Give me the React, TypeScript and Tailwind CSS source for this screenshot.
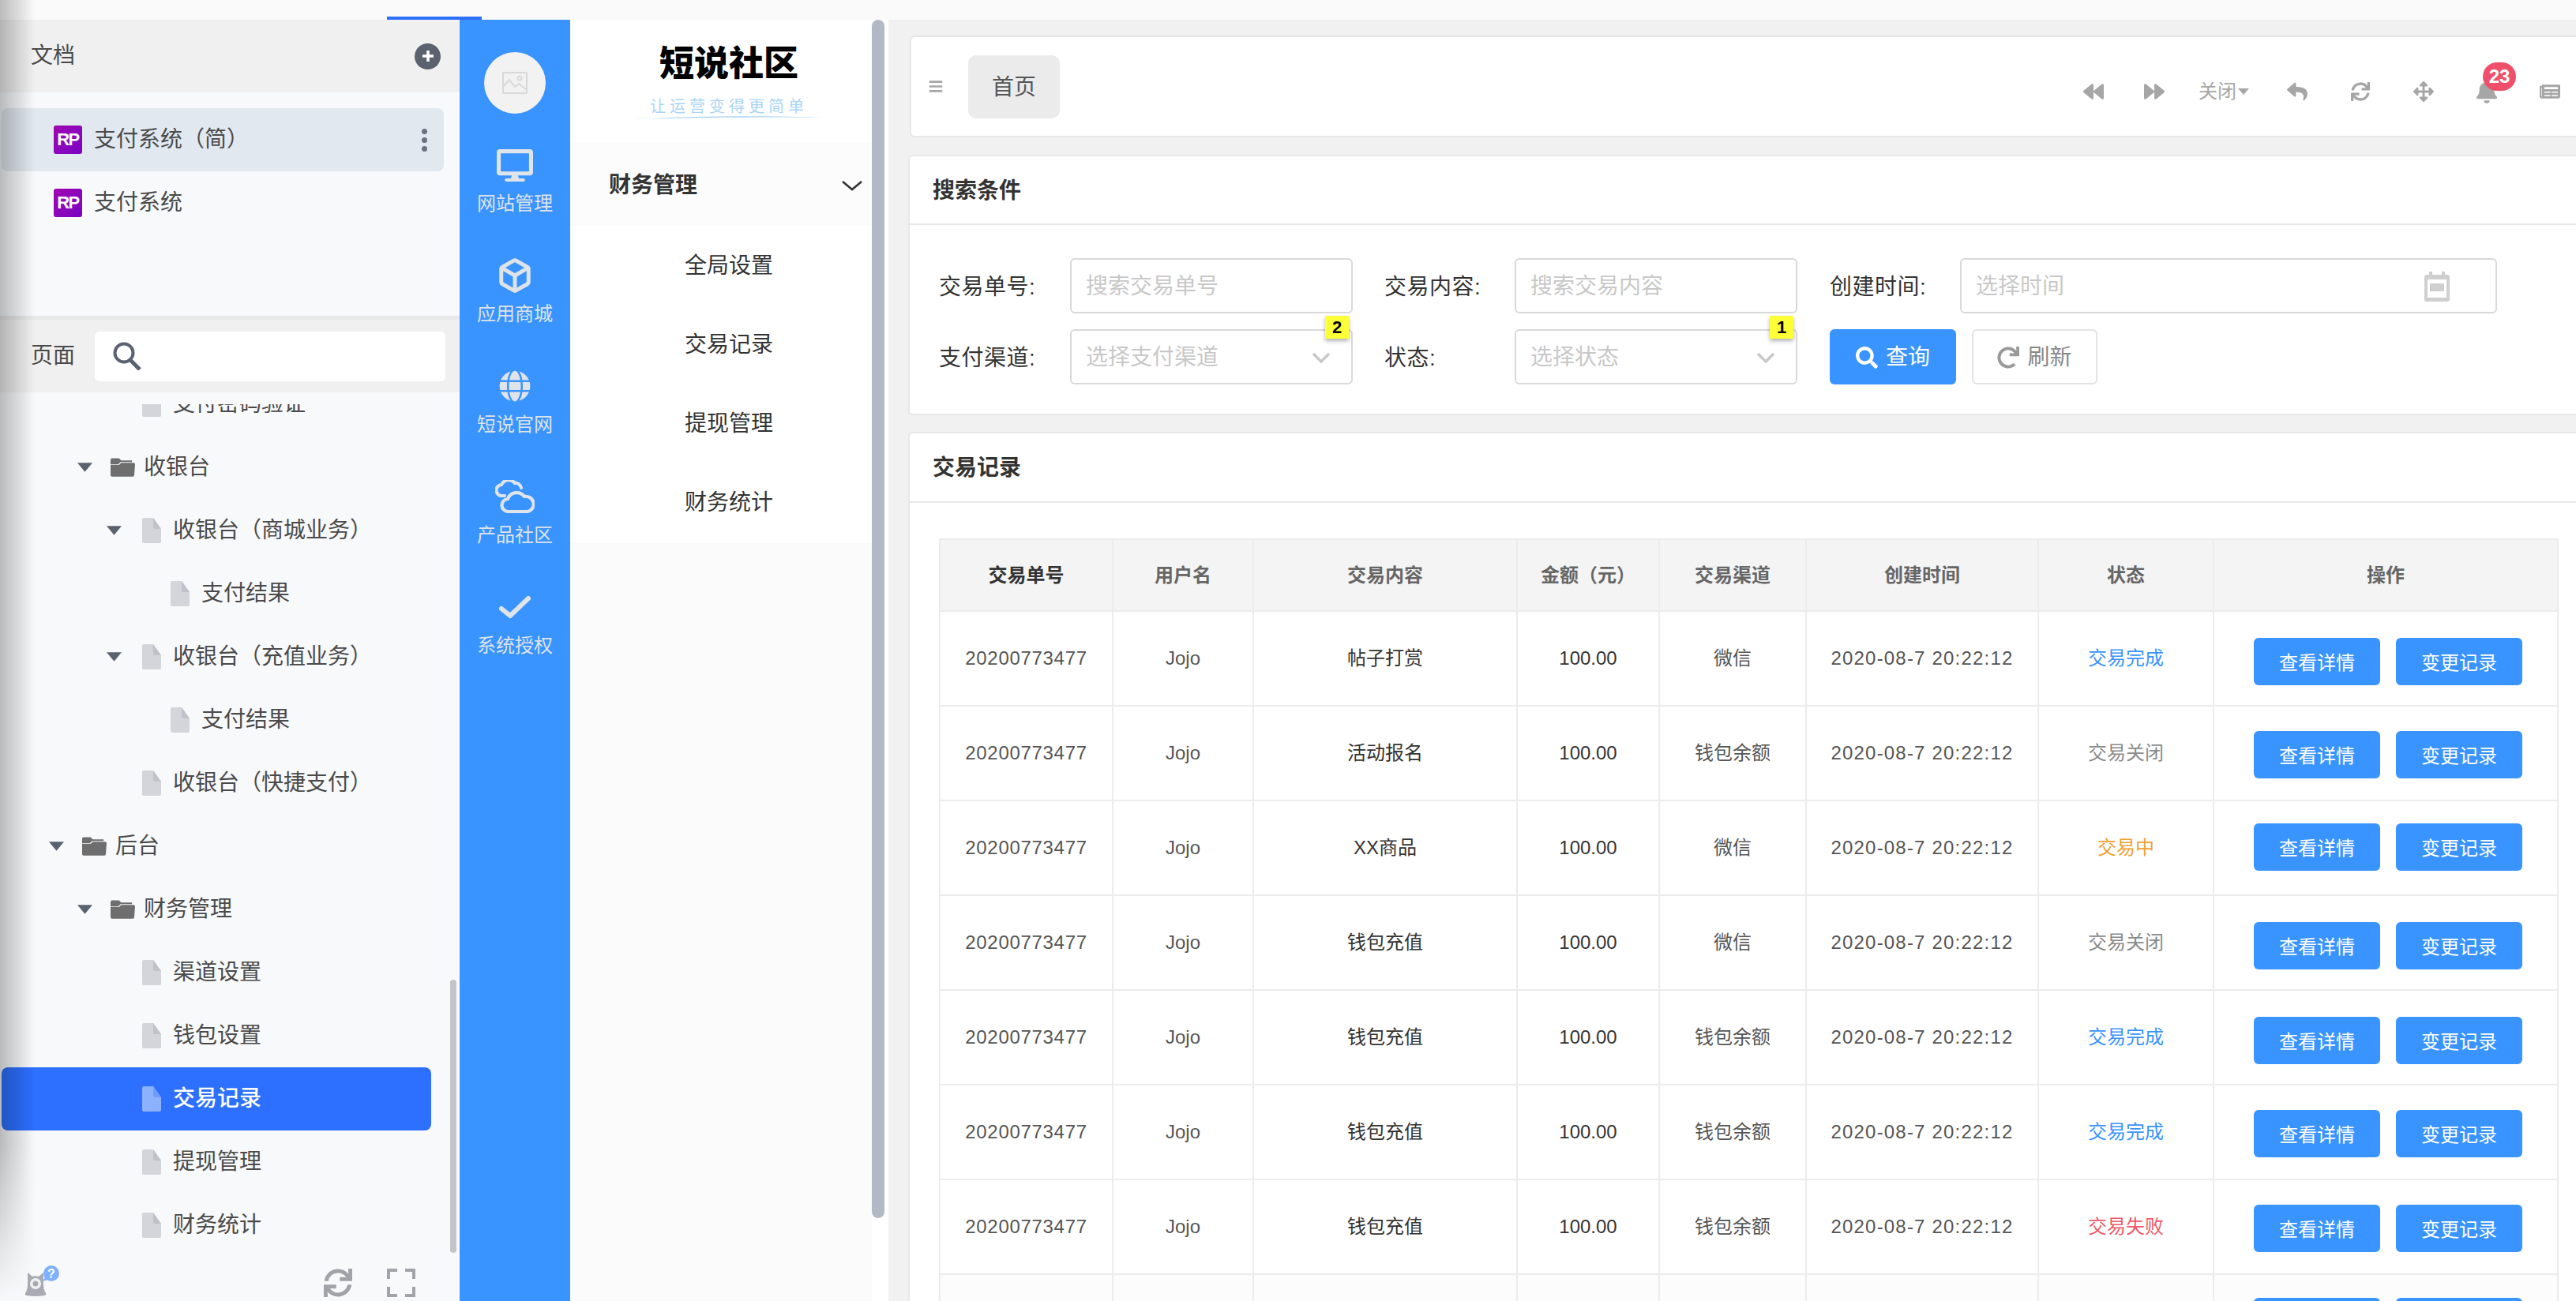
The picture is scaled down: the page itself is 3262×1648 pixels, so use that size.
import React from "react";
import { Box } from "lucide-react";
import {
  FaArrowsAlt,
  FaBackward,
  FaBars,
  FaBell,
  FaDesktop,
  FaForward,
  FaGlobe,
  FaNewspaper,
  FaRedo,
  FaReply,
  FaSearch,
  FaSync,
} from "react-icons/fa";

type TreeRow = {
  label: string;
  kind: "folder" | "file";
  caretClass?: string;
  iconClass: string;
  active?: boolean;
};

const treeRows: TreeRow[] = [
  { label: "支付密码验证", kind: "file", iconClass: "ml-[180px]" },
  { label: "收银台", kind: "folder", caretClass: "ml-[98px]", iconClass: "ml-[23px]" },
  { label: "收银台（商城业务）", kind: "file", caretClass: "ml-[135px]", iconClass: "ml-[26px]" },
  { label: "支付结果", kind: "file", iconClass: "ml-[216px]" },
  { label: "收银台（充值业务）", kind: "file", caretClass: "ml-[135px]", iconClass: "ml-[26px]" },
  { label: "支付结果", kind: "file", iconClass: "ml-[216px]" },
  { label: "收银台（快捷支付）", kind: "file", iconClass: "ml-[180px]" },
  { label: "后台", kind: "folder", caretClass: "ml-[62px]", iconClass: "ml-[23px]" },
  { label: "财务管理", kind: "folder", caretClass: "ml-[98px]", iconClass: "ml-[23px]" },
  { label: "渠道设置", kind: "file", iconClass: "ml-[180px]" },
  { label: "钱包设置", kind: "file", iconClass: "ml-[180px]" },
  { label: "交易记录", kind: "file", iconClass: "ml-[178px]", active: true },
  { label: "提现管理", kind: "file", iconClass: "ml-[180px]" },
  { label: "财务统计", kind: "file", iconClass: "ml-[180px]" },
];

const tableHead = ["交易单号", "用户名", "交易内容", "金额（元）", "交易渠道", "创建时间", "状态", "操作"];

const tableRows = [
  { content: "帖子打赏", channel: "微信", status: "交易完成", statusClass: "text-[#3994ff]", btnClass: "mt-[33px]" },
  { content: "活动报名", channel: "钱包余额", status: "交易关闭", statusClass: "text-[#8a8a8a]", btnClass: "mt-[31px]" },
  { content: "XX商品", channel: "微信", status: "交易中", statusClass: "text-[#f0a030]", btnClass: "mt-[28px]" },
  { content: "钱包充值", channel: "微信", status: "交易关闭", statusClass: "text-[#8a8a8a]", btnClass: "mt-[33px]" },
  { content: "钱包充值", channel: "钱包余额", status: "交易完成", statusClass: "text-[#3994ff]", btnClass: "mt-[33px]" },
  { content: "钱包充值", channel: "钱包余额", status: "交易完成", statusClass: "text-[#3994ff]", btnClass: "mt-[31px]" },
  { content: "钱包充值", channel: "钱包余额", status: "交易失败", statusClass: "text-[#f05a6a]", btnClass: "mt-[31px]" },
  { content: "钱包充值", channel: "钱包余额", status: "交易完成", statusClass: "text-[#3994ff]", btnClass: "mt-[29px]" },
];

const RpIcon = () => (
  <span className="flex h-[36px] w-[36px] shrink-0 items-center justify-center rounded-[3px] bg-gradient-to-br from-[#a000b0] to-[#7a00c4] text-[22px] font-bold leading-none tracking-[-1.5px] text-white">
    RP
  </span>
);

const FileIcon = ({ active }: { active?: boolean }) => (
  <svg viewBox="0 0 24 32" className="h-[32px] w-[24px] shrink-0">
    <path
      d="M2 0h12l10 14v16a2 2 0 0 1-2 2H2a2 2 0 0 1-2-2V2a2 2 0 0 1 2-2z"
      fill={active ? "#8cb2ff" : "#d3d5da"}
    />
    <path d="M14 0l10 14H16a2 2 0 0 1-2-2z" fill={active ? "#6f9cf8" : "#bfc2c9"} />
  </svg>
);

const FolderIcon = () => (
  <svg viewBox="0 0 32 24" className="h-[24px] w-[31px] shrink-0">
    <path d="M0 2a2 2 0 0 1 2-2h9l3 3h14v2H13l-3 3H0z" fill="#6e6e6e" />
    <path d="M0 9h11l3-3h16a2 2 0 0 1 2 2l-1 14a2 2 0 0 1-2 2H2a2 2 0 0 1-2-2z" fill="#6e6e6e" />
  </svg>
);

const Caret = () => (
  <svg viewBox="0 0 20 12" className="h-[12px] w-[19px] shrink-0">
    <path d="M0 0h20L10 12z" fill="#5a6270" />
  </svg>
);

const TreeItem = ({ row }: { row: TreeRow }) => (
  <div className="h-[80px] w-[546px] shrink-0">
    <div
      className={
        row.active
          ? "ml-[2px] flex h-[80px] w-[544px] items-center rounded-[8px] bg-[#2d6fff] font-medium text-white"
          : "flex h-[80px] items-center text-[#4a4a4a]"
      }
    >
      {row.caretClass && <span className={row.caretClass}><Caret /></span>}
      <span className={row.iconClass}>
        {row.kind === "folder" ? <FolderIcon /> : <FileIcon active={row.active} />}
      </span>
      <span className={row.kind === "folder" ? "ml-[11px] text-[28px] leading-none" : "ml-[15px] text-[28px] leading-none"}>
        {row.label}
      </span>
    </div>
  </div>
);

const DocsPanel = () => (
  <div className="relative flex h-full w-[582px] shrink-0 flex-col bg-[#f8f9fb]">
    <div className="flex h-[92px] shrink-0 items-center justify-between bg-[#f0f0f0] pl-[39px] pr-[24px]">
      <span className="text-[28px] leading-none text-[#4a4a4a]">文档</span>
      <span className="flex h-[33px] w-[33px] items-center justify-center rounded-full bg-[#5a6270]">
        <svg viewBox="0 0 20 20" className="h-[20px] w-[20px]">
          <path d="M10 3v14M3 10h14" stroke="#fff" strokeWidth="3.5" />
        </svg>
      </span>
    </div>
    <div className="h-[283px] shrink-0 pt-[20px]">
      <div className="ml-[2px] flex h-[80px] w-[560px] items-center rounded-[8px] bg-[#e2e8f0] pl-[66px] pr-[21px] text-[#4a4a4a]">
        <RpIcon />
        <span className="ml-[15px] text-[28px] leading-none">支付系统（简）</span>
        <span className="ml-auto flex flex-col gap-[4px]">
          <i className="block h-[7px] w-[7px] rounded-full bg-[#6b7280]" />
          <i className="block h-[7px] w-[7px] rounded-full bg-[#6b7280]" />
          <i className="block h-[7px] w-[7px] rounded-full bg-[#6b7280]" />
        </span>
      </div>
      <div className="flex h-[80px] items-center pl-[68px] text-[#4a4a4a]">
        <RpIcon />
        <span className="ml-[15px] text-[28px] leading-none">支付系统</span>
      </div>
    </div>
    <div className="h-[5px] shrink-0 bg-[#e8e8e8]" />
    <div className="flex h-[92px] shrink-0 items-center bg-[#f0f0f0] pl-[39px]">
      <span className="text-[28px] leading-none text-[#4a4a4a]">页面</span>
      <div className="ml-[25px] flex h-[63px] w-[444px] items-center rounded-[6px] bg-white pl-[23px]">
        <svg viewBox="0 0 36 36" className="h-[36px] w-[36px]" fill="none" stroke="#5a6270">
          <circle cx="14" cy="14" r="11.5" strokeWidth="4" />
          <path d="M22 23l12 12" strokeWidth="5" />
        </svg>
      </div>
    </div>
    <div className="relative min-h-0 flex-1 pt-[15px]">
      <div className="h-full overflow-hidden">
        <div className="-mt-[40px] flex flex-col">
          {treeRows.map((row, i) => (
            <TreeItem key={i} row={row} />
          ))}
        </div>
      </div>
      <div className="absolute right-[4px] top-[744px] h-[346px] w-[8px] rounded-full bg-[#c4c5c9]" />
    </div>
    <div className="flex h-[58px] shrink-0 items-start pl-[32px] pt-[13px]">
      <svg viewBox="0 0 44 40" className="h-[40px] w-[44px] shrink-0">
        <path
          d="M3 9l6 5a13 13 0 0 1 8 0l6-5v14q0 8 3 12 q1 3-2 3 q-11 2-22 0 q-3 0-2-3 q3-4 3-12z"
          fill="#a8abb2"
        />
        <circle cx="13" cy="23" r="7" fill="#f0f1f3" />
        <circle cx="13" cy="23" r="3.5" fill="#a8abb2" />
        <path d="M25 15l-3 5 7-2z" fill="#7fb0ff" />
        <circle cx="33" cy="10" r="10" fill="#7fb0ff" />
        <text x="33" y="16" textAnchor="middle" fontSize="16" fontWeight="700" fill="#fff">?</text>
      </svg>
      <FaSync className="ml-[334px] mt-[4px] h-[36px] w-[36px] text-[#a0a3a8]" />
      <svg viewBox="0 0 36 36" className="ml-[44px] mt-[4px] h-[36px] w-[36px]">
        <path d="M2 13V2h11M23 2h11v11M34 23v11H23M13 34H2V23" fill="none" stroke="#a0a3a8" strokeWidth="4" />
      </svg>
    </div>
  </div>
);

const RailItem = ({ icon, label }: { icon: React.ReactNode; label: string }) => (
  <div className="flex h-[140px] flex-col items-center pt-[41px]">
    <div className="flex h-[48px] items-center justify-center">{icon}</div>
    <span className="mt-[13px] text-[24px] leading-none text-[#dfe3ea]">{label}</span>
  </div>
);

const CloudsIcon = () => (
  <svg viewBox="0 0 50 42" className="h-[42px] w-[50px]">
    <path
      d="M12 20H9a7 7 0 0 1-1-14 10 10 0 0 1 17-2 7 7 0 0 1 8 6"
      fill="none"
      stroke="#dfe3ea"
      strokeWidth="4.2"
      strokeLinecap="round"
    />
    <path
      d="M17 40a8 8 0 0 1-1-16 12 12 0 0 1 21-3 9 9 0 0 1 4 19z"
      fill="none"
      stroke="#dfe3ea"
      strokeWidth="4.2"
      strokeLinejoin="round"
    />
  </svg>
);

const Rail = () => (
  <div className="flex h-full w-[140px] shrink-0 flex-col items-stretch bg-[#3994ff] pt-[41px]">
    <div className="mx-auto flex h-[78px] w-[78px] items-center justify-center rounded-full bg-[#f2f2f2]">
      <svg viewBox="0 0 32 28" className="h-[28px] w-[32px]" fill="none" stroke="#d8d8d8" strokeWidth="2">
        <rect x="1" y="1" width="30" height="26" rx="1" />
        <path d="M1 19l8-9 7 9 5-4 10 8" />
        <circle cx="22" cy="8" r="2.5" />
      </svg>
    </div>
    <RailItem icon={<FaDesktop className="h-[41px] w-[46px] text-[#dfe3ea]" />} label="网站管理" />
    <RailItem icon={<Box className="h-[46px] w-[46px] text-[#dfe3ea]" strokeWidth={2.6} />} label="应用商城" />
    <RailItem icon={<FaGlobe className="h-[40px] w-[40px] text-[#dfe3ea]" />} label="短说官网" />
    <RailItem icon={<CloudsIcon />} label="产品社区" />
    <RailItem
      icon={
        <svg viewBox="0 0 40 32" className="h-[32px] w-[40px]">
          <path d="M3 18l11 9L37 5" fill="none" stroke="#dfe3ea" strokeWidth="6" strokeLinecap="round" strokeLinejoin="round" />
        </svg>
      }
      label="系统授权"
    />
  </div>
);

const SubMenu = () => (
  <div className="flex h-full w-[403px] shrink-0 bg-white">
    <div className="flex h-full w-[382px] shrink-0 flex-col bg-[#fbfbfb]">
      <div className="flex h-[155px] shrink-0 flex-col items-center bg-white pl-[20px] pt-[33px]">
        <span className="text-[44px] font-black leading-[46px] text-black">短说社区</span>
        <span className="mt-[20px] text-[20px] leading-[22px] tracking-[5px] text-[#a9d4f5]">让运营变得更简单</span>
        <svg viewBox="0 0 240 6" className="h-[6px] w-[240px]">
          <path d="M0 5C70 1 170 0 240 3 170 2 80 3 0 5z" fill="#a9d4f5" />
        </svg>
      </div>
      <div className="flex h-[105px] shrink-0 items-center justify-between bg-[#fcfcfc] pl-[49px] pr-[12px] pt-[4px]">
        <span className="text-[28px] font-bold leading-none text-[#333]">财务管理</span>
        <svg viewBox="0 0 26 14" className="h-[14px] w-[26px]">
          <path d="M1 2l12 10L25 2" fill="none" stroke="#333" strokeWidth="2.6" />
        </svg>
      </div>
      <div className="flex h-[403px] shrink-0 flex-col bg-white">
        {["全局设置", "交易记录", "提现管理", "财务统计"].map((t) => (
          <div key={t} className="flex h-[100px] items-center pl-[145px] pt-[4px] text-[28px] leading-none text-[#333]">
            {t}
          </div>
        ))}
      </div>
    </div>
    <div className="h-[1518px] w-[16px] shrink-0 rounded-[8px] bg-[#b2b9c4]" />
  </div>
);

const ToolIcon = ({ children, className }: { children: React.ReactNode; className: string }) => (
  <span className={className}>{children}</span>
);

const TabsBar = () => (
  <div className="ml-[2px] flex h-[129px] shrink-0 items-center rounded-l-[6px] border-y-2 border-l-2 border-[#e7e7e7] bg-white pl-[20px]">
    <FaBars className="h-[19px] w-[22px] text-[#a6a6a6]" />
    <div className="ml-[30px] flex h-[80px] w-[116px] items-center justify-center rounded-[10px] bg-[#ebebeb] pt-[2px] text-[28px] leading-none text-[#555]">
      首页
    </div>
    <div className="ml-auto flex items-center pr-[20px] pt-[12px] text-[#a6a6a6]">
      <ToolIcon className="flex w-[26px] justify-center"><FaBackward className="h-[26px] w-[26px]" /></ToolIcon>
      <ToolIcon className="ml-[51px] flex w-[26px] justify-center"><FaForward className="h-[26px] w-[26px]" /></ToolIcon>
      <span className="ml-[43px] flex items-center text-[24px] leading-none">
        关闭
        <i className="ml-[2px] block h-0 w-0 border-x-[7px] border-t-[8px] border-x-transparent border-t-[#a6a6a6]" />
      </span>
      <ToolIcon className="ml-[48px] flex w-[26px] justify-center"><FaReply className="h-[26px] w-[26px]" /></ToolIcon>
      <ToolIcon className="ml-[54px] flex w-[26px] justify-center"><FaSync className="h-[24px] w-[24px]" /></ToolIcon>
      <ToolIcon className="ml-[54px] flex w-[26px] justify-center"><FaArrowsAlt className="h-[26px] w-[26px]" /></ToolIcon>
      <ToolIcon className="relative ml-[54px] flex w-[26px] justify-center">
        <FaBell className="h-[30px] w-[28px]" />
        <span className="absolute -top-[22px] -right-[24px] flex h-[36px] w-[42px] items-center justify-center rounded-full bg-[#ef4f6b] text-[24px] font-bold leading-none text-white">
          23
        </span>
      </ToolIcon>
      <ToolIcon className="ml-[54px] flex w-[26px] justify-center"><FaNewspaper className="h-[24px] w-[26px]" /></ToolIcon>
    </div>
  </div>
);

const Label = ({ text, className }: { text: string; className: string }) => (
  <span className={`${className} shrink-0 pt-[4px] text-[28px] leading-none tracking-[0.5px] text-[#333]`}>{text}</span>
);

const SelectBox = ({ placeholder, badge }: { placeholder: string; badge: string }) => (
  <div className="relative flex h-[70px] w-[358px] items-center rounded-[6px] border-2 border-[#d9d9d9] pl-[18px] pr-[26px] pt-[2px] text-[28px] leading-none text-[#c8c8c8]">
    {placeholder}
    <svg viewBox="0 0 24 14" className="ml-auto h-[14px] w-[24px]">
      <path d="M2 2l10 10L22 2" fill="none" stroke="#c8c8c8" strokeWidth="3.4" />
    </svg>
    <span className="absolute -top-[19px] right-[3px] flex h-[29px] w-[30px] items-center justify-center bg-[#ffff38] text-[22px] font-bold leading-none text-black shadow-[0_3px_5px_rgba(0,0,0,0.3)]">
      {badge}
    </span>
  </div>
);

const InputBox = ({ placeholder }: { placeholder: string }) => (
  <div className="flex h-[70px] w-[358px] items-center rounded-[6px] border-2 border-[#d9d9d9] pl-[18px] pt-[2px] text-[28px] leading-none text-[#c8c8c8]">
    {placeholder}
  </div>
);

const SearchCard = () => (
  <div className="mt-[22px] h-[330px] shrink-0 rounded-l-[6px] border-y-2 border-l-2 border-[#e7e7e7] bg-white">
    <div className="flex h-[87px] items-center border-b-2 border-[#e7e7e7] pl-[29px] pt-[2px] text-[28px] font-bold leading-none text-[#333]">
      搜索条件
    </div>
    <div className="flex flex-col gap-[20px] pl-[37px] pt-[42px]">
      <div className="flex items-center">
        <Label text="交易单号:" className="w-[166px]" />
        <InputBox placeholder="搜索交易单号" />
        <Label text="交易内容:" className="ml-[40px] w-[165px]" />
        <InputBox placeholder="搜索交易内容" />
        <Label text="创建时间:" className="ml-[41px] w-[165px]" />
        <div className="flex h-[70px] w-[680px] items-center rounded-[6px] border-2 border-[#d9d9d9] pl-[18px] pt-[2px] text-[28px] leading-none text-[#c8c8c8]">
          选择时间
          <svg viewBox="0 0 32 38" className="ml-[456px] h-[38px] w-[32px]">
            <path d="M6 0h4v4h12V0h4v4h3a3 3 0 0 1 3 3v28a3 3 0 0 1-3 3H3a3 3 0 0 1-3-3V7a3 3 0 0 1 3-3h3z" fill="#cfcfcf" />
            <rect x="4" y="10" width="24" height="23" fill="#fff" />
            <rect x="7" y="15" width="18" height="10" fill="#cfcfcf" />
          </svg>
        </div>
      </div>
      <div className="flex items-center">
        <Label text="支付渠道:" className="w-[166px]" />
        <SelectBox placeholder="选择支付渠道" badge="2" />
        <Label text="状态:" className="ml-[40px] w-[165px]" />
        <SelectBox placeholder="选择状态" badge="1" />
        <button className="ml-[41px] flex h-[70px] w-[160px] items-center justify-center gap-[10px] rounded-[6px] bg-[#3994ff] pt-[2px] text-[28px] leading-none text-white">
          <FaSearch className="h-[28px] w-[28px]" />
          查询
        </button>
        <button className="ml-[20px] flex h-[70px] w-[159px] items-center justify-center gap-[10px] rounded-[6px] border-2 border-[#e3e3e3] pt-[2px] text-[28px] leading-none text-[#888]">
          <FaRedo className="h-[28px] w-[28px] text-[#999]" />
          刷新
        </button>
      </div>
    </div>
  </div>
);

const RecordsCard = () => (
  <div className="mt-[21px] min-h-0 flex-1 overflow-hidden rounded-tl-[6px] border-t-2 border-l-2 border-[#e7e7e7] bg-white">
    <div className="flex h-[88px] items-center border-b-2 border-[#e7e7e7] pl-[29px] pt-[2px] text-[28px] font-bold leading-none text-[#333]">
      交易记录
    </div>
    <div className="pl-[37px] pt-[45px]">
      <table className="w-[2049px] table-fixed border-collapse text-[24px] leading-none">
        <colgroup>
          <col className="w-[219px]" />
          <col className="w-[178px]" />
          <col className="w-[334px]" />
          <col className="w-[180px]" />
          <col className="w-[186px]" />
          <col className="w-[294px]" />
          <col className="w-[222px]" />
          <col className="w-[436px]" />
        </colgroup>
        <thead>
          <tr className="h-[91px] bg-[#f4f4f4]">
            {tableHead.map((h, i) => (
              <th
                key={h}
                className={
                  i === 0
                    ? "border-2 border-[#ececec] font-bold text-[#333]"
                    : "border-2 border-[#ececec] font-bold text-[#666]"
                }
              >
                {h}
              </th>
            ))}
          </tr>
        </thead>
        <tbody>
          {tableRows.map((r, i) => (
            <tr key={i} className={i === 7 ? "h-[120px] bg-[#fcfcfc] text-[#555]" : "h-[120px] text-[#555]"}>
              <td className="border-2 border-[#ececec] text-center tracking-[0.7px]">20200773477</td>
              <td className="border-2 border-[#ececec] text-center">Jojo</td>
              <td className="border-2 border-[#ececec] text-center text-[#333]">{r.content}</td>
              <td className="border-2 border-[#ececec] text-center text-[#333]">100.00</td>
              <td className="border-2 border-[#ececec] text-center">{r.channel}</td>
              <td className="border-2 border-[#ececec] text-center tracking-[1.2px]">2020-08-7 20:22:12</td>
              <td className={`border-2 border-[#ececec] text-center ${r.statusClass}`}>{r.status}</td>
              <td className="border-2 border-[#ececec] align-top">
                <div className={`flex gap-[20px] pl-[50px] ${r.btnClass}`}>
                  <button className="h-[60px] w-[160px] rounded-[6px] bg-[#3994ff] pt-[3px] text-[24px] text-white">查看详情</button>
                  <button className="h-[60px] w-[160px] rounded-[6px] bg-[#3994ff] pt-[3px] text-[24px] text-white">变更记录</button>
                </div>
              </td>
            </tr>
          ))}
        </tbody>
      </table>
    </div>
  </div>
);

export default function App() {
  return (
    <div className="relative flex h-[1648px] w-[3262px] flex-col overflow-hidden bg-[#f1f1f1] font-['Liberation_Sans','Noto_Sans_CJK_SC',sans-serif]">
      <div className="flex h-[25px] shrink-0 items-end bg-[#fafafa] pl-[490px]">
        <div className="h-[4px] w-[120px] bg-[#2d6fff]" />
      </div>
      <div className="flex min-h-0 flex-1">
        <DocsPanel />
        <Rail />
        <SubMenu />
        <main className="flex min-w-0 flex-1 flex-col pl-[25px] pt-[20px]">
          <TabsBar />
          <SearchCard />
          <RecordsCard />
        </main>
      </div>
      {/* window shadow at the left edge of the capture */}
      <div className="pointer-events-none absolute bottom-0 left-0 top-0 w-[44px] bg-gradient-to-r from-[rgba(0,0,0,0.25)] to-transparent [mask-image:linear-gradient(to_bottom,black_88%,transparent)]" />
    </div>
  );
}
